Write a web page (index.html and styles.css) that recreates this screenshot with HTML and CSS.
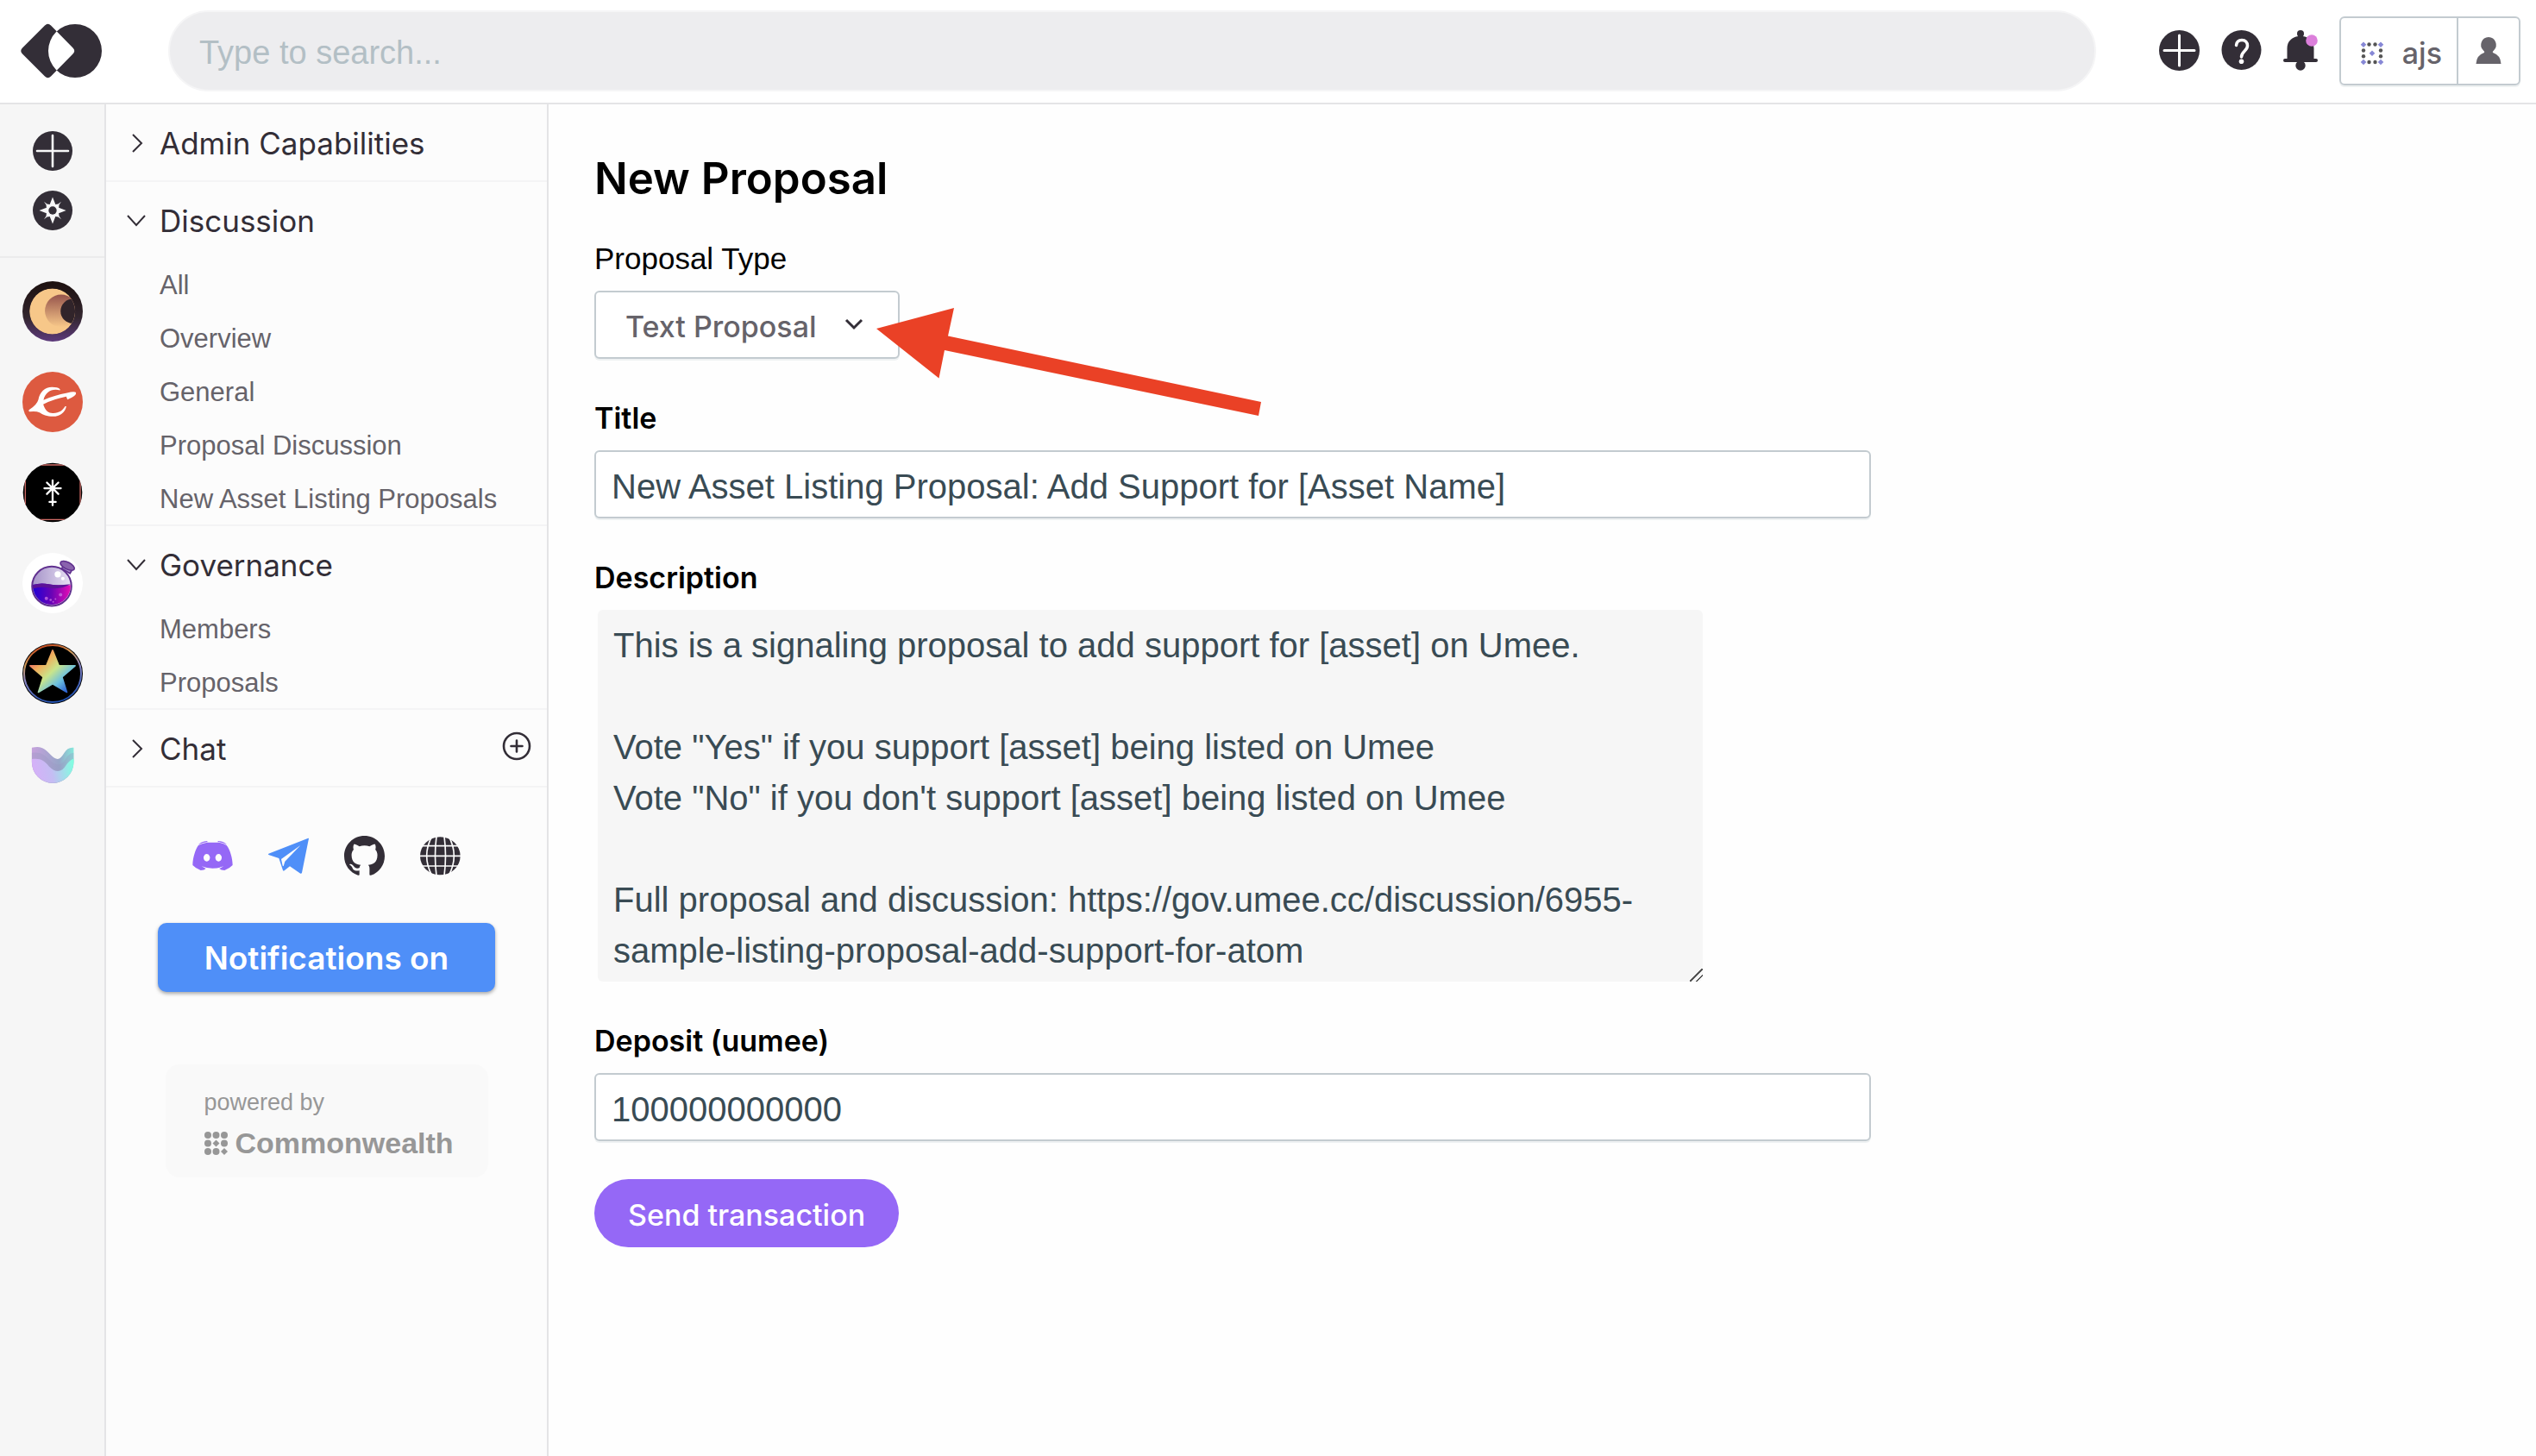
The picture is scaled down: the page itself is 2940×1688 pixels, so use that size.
FILE: index.html
```html
<!DOCTYPE html>
<html lang="en">
<head>
<meta charset="utf-8">
<title>New Proposal</title>
<link rel="stylesheet" href="styles.css">
</head>
<body>
<header class="topbar">
  <a class="logo" href="#" aria-label="Home">
    <svg width="94" height="64" viewBox="0 0 94 64"><path fill="#332e37" fill-rule="evenodd" d="M28 2.500Q31.500-1 35 2.500L60.500 28.500Q64 32 60.500 35.500L35 61.500Q31.500 65 28 61.500L2 35.500Q-1.500 32 2 28.500ZM63 1a31 31 0 1 1 0 62a31 31 0 1 1 0-62Z"/></svg>
  </a>
  <input class="search" type="search" placeholder="Type to search..." aria-label="Search">
  <nav class="actions">
    <button class="icon-btn" aria-label="Create">
      <svg width="47" height="47" viewBox="0 0 47 47"><circle cx="23.500" cy="23.500" r="23.500" fill="#332e37"/><path d="M23.500 6v35M6 23.500h35" stroke="#fff" stroke-width="3" stroke-linecap="round"/></svg>
    </button>
    <button class="icon-btn" aria-label="Help">
      <svg width="47" height="47" viewBox="0 0 47 47"><circle cx="23.500" cy="23" r="23" fill="#332e37"/><path d="M17.500 17.500C18 13 21 11.500 24 11.500C28 11.500 30.500 14 30.500 18C30.500 24 23.500 24.500 23.500 31" fill="none" stroke="#fff" stroke-width="3.500" stroke-linecap="round"/><circle cx="23.500" cy="36.300" r="2.800" fill="#fff"/></svg>
    </button>
    <button class="icon-btn" aria-label="Notifications">
      <svg width="40" height="47" viewBox="0 0 40 47"><g fill="#332e37"><circle cx="20" cy="4" r="4"/><path d="M17.500 4h5v3C30 8 35.500 13 35.500 21V33h2.500a2 2 0 0 1 0 4H2a2 2 0 0 1 0-4h2.500V21C4.500 13 10 8 17.500 7Z"/><circle cx="20" cy="41" r="5.700"/></g><circle cx="33" cy="12" r="6.800" fill="#dc7fdb"/></svg>
    </button>
    <div class="account">
      <button class="account-name">
        <svg width="28" height="28" viewBox="0 0 28 28"><g fill="#555"><circle cx="10.500" cy="3.500" r="2.200"/><circle cx="17.500" cy="3.500" r="2.200"/><circle cx="10.500" cy="24" r="2.200"/><circle cx="17.500" cy="24" r="2.200"/><circle cx="4" cy="10.500" r="2.200"/><circle cx="4" cy="17.200" r="2.200"/><circle cx="24" cy="10.500" r="2.200"/><circle cx="24" cy="17.200" r="2.200"/></g><path fill="#8788d6" d="M4 .5l3.300 3.300L4 7.100.7 3.800ZM24 .5l3.300 3.300L24 7.100l-3.300-3.300ZM4 20.700L7.300 24 4 27.300.7 24ZM24 20.700l3.300 3.300-3.300 3.300-3.300-3.300ZM14 10.500l3.300 3.300-3.300 3.300-3.300-3.300Z"/></svg>
        <span>ajs</span>
      </button>
      <button class="account-menu" aria-label="Account">
        <svg width="30" height="31" viewBox="0 0 30 31"><path fill="#66636a" d="M15 0a9 9 0 0 1 6 15.500Q19 17.300 20 18Q29 21 29.500 31H.5Q1 21 10 18Q11 17.300 9 15.500A9 9 0 0 1 15 0Z"/></svg>
      </button>
    </div>
  </nav>
</header>

<div class="layout">
  <nav class="rail" aria-label="Communities">
    <div class="rail-tools">
      <button class="icon-btn" aria-label="New community">
        <svg width="46" height="46" viewBox="0 0 46 46"><circle cx="23" cy="23" r="23" fill="#332e37"/><path d="M23 5v36M5 23h36" stroke="#f7f7f8" stroke-width="2.600" stroke-linecap="round"/></svg>
      </button>
      <button class="icon-btn" aria-label="Explore">
        <svg width="46" height="46" viewBox="0 0 46 46"><circle cx="23" cy="23" r="23" fill="#332e37"/><path fill="#f7f7f8" d="M23 7.500l3.300 8.500 3.200-.6 3.500-2.700-2.500 3.700-.4 3.300 8.500 3.300-8.500 3.300.4 3.300 2.500 3.700-3.500-2.700-3.200-.6L23 38.500 19.700 30l-3.200.6-3.500 2.700 2.500-3.700.4-3.300L7.500 23l8.400-3.300-.4-3.300-2.500-3.700 3.500 2.700 3.200.6Z"/><circle cx="23" cy="23" r="4.700" fill="#332e37"/></svg>
      </button>
    </div>
    <div class="communities">
      <a href="#" aria-label="Moon"><svg viewBox="0 0 212 212"><defs><linearGradient id="m1" x2="0" y2="1"><stop offset="0" stop-color="#1c100e"/><stop offset=".6" stop-color="#33262f"/><stop offset="1" stop-color="#5d3a7c"/></linearGradient><linearGradient id="m2" x2="0" y2="1"><stop offset="0" stop-color="#96544c"/><stop offset="1" stop-color="#f7c789"/></linearGradient><clipPath id="m3"><circle cx="105" cy="106" r="80"/></clipPath></defs><circle cx="106" cy="106" r="106" fill="url(#m1)"/><g clip-path="url(#m3)"><circle cx="105" cy="106" r="81" fill="#f7c789"/><circle cx="136" cy="104" r="57" fill="url(#m2)"/><circle cx="177" cy="105" r="43" fill="#31242a"/></g></svg></a>
      <a href="#" aria-label="Evmos"><svg viewBox="0 0 212 212"><circle cx="106" cy="106" r="106" fill="#dd5a40"/><path fill="#fff" d="M23 134Q51 117 56 98C60 72 79 54 104 54Q124 54 132 61V65C103 57 80 72 74 99Q112 82 157 74Q183 67 188 73Q192 84 158 98L154 87Q108 96 73 114C80 137 92 145 106 145C128 146 142 135 150 121H154C151 142 132 157 107 157C87 157 70 150 60 143Q48 137 25 140Q20 138 23 134Z"/></svg></a>
      <a href="#" aria-label="Juno"><svg viewBox="0 0 212 212"><defs><clipPath id="j1"><circle cx="106" cy="106" r="104"/></clipPath></defs><g clip-path="url(#j1)"><path d="M0 0h212v212H0Z"/><path d="M10 9h193v192H10Z" fill="none" stroke="#cf6b66" stroke-width="4"/></g><path d="M106 63v88M77 91h58M86 71l40 40M126 71l-40 40M95 139h22" stroke="#fff" stroke-width="7" stroke-linecap="round"/></svg></a>
      <a href="#" aria-label="Osmosis"><svg viewBox="0 0 212 212"><defs><linearGradient id="o1"><stop offset="0" stop-color="#2100d5"/><stop offset=".5" stop-color="#6a04b5"/><stop offset="1" stop-color="#e60db5"/></linearGradient><linearGradient id="o2"><stop offset="0" stop-color="#a593c8"/><stop offset="1" stop-color="#e8e0f4"/></linearGradient></defs><circle cx="106" cy="106" r="106" fill="#fff"/><path d="M138 55l10-18 30 16-11 19Z" fill="#a68cc9" stroke="#60308f" stroke-width="5"/><ellipse cx="158" cy="45" rx="27" ry="12" transform="rotate(27 158 45)" fill="#8a63ad" stroke="#60308f" stroke-width="5"/><circle cx="103" cy="117" r="69" fill="url(#o2)" stroke="#60308f" stroke-width="6"/><path d="M37 112Q65 104 92 110T169 113A66 66 0 0 1 37 119Z" fill="url(#o1)"/><path d="M37 112Q65 104 92 110T169 110Q130 131 90 122Q60 117 37 126Z" fill="#5c1397"/><circle cx="124" cy="75" r="11" fill="#fff"/><circle cx="142" cy="90" r="6" fill="#fff"/><g fill="#c76de0" opacity=".8"><circle cx="84" cy="160" r="6"/><circle cx="134" cy="147" r="6"/><circle cx="99" cy="165" r="4"/><circle cx="116" cy="162" r="3"/><circle cx="108" cy="172" r="3"/></g></svg></a>
      <a href="#" aria-label="Stargaze"><svg viewBox="0 0 212 212"><defs><linearGradient id="s1" x1=".1" y1=".1" x2=".9" y2=".9"><stop offset="0" stop-color="#e8576a"/><stop offset=".25" stop-color="#efae5c"/><stop offset=".5" stop-color="#c9e58b"/><stop offset=".75" stop-color="#6cc0e0"/><stop offset="1" stop-color="#2b5fd0"/></linearGradient><linearGradient id="s2" x1=".3" x2=".6" y2="1"><stop offset="0" stop-color="#c7481f"/><stop offset=".25" stop-color="#cf9a58"/><stop offset=".5" stop-color="#8a86c4"/><stop offset="1" stop-color="#1d4fb0"/></linearGradient></defs><circle cx="106" cy="106" r="106"/><circle cx="106" cy="106" r="100" fill="none" stroke="url(#s2)" stroke-width="6"/><path fill="url(#s1)" stroke="url(#s1)" stroke-width="5" stroke-linejoin="round" d="M106 24l22 54h57l-46 40 17 53-50-29-50 29 17-53-46-40h57Z"/></svg></a>
      <a href="#" aria-label="Umee"><svg viewBox="0 0 212 212"><defs><linearGradient id="u1" y1=".3" y2=".2"><stop offset="0" stop-color="#d6b0f8"/><stop offset=".45" stop-color="#c4bdf3"/><stop offset="1" stop-color="#80ffe0"/></linearGradient><linearGradient id="u2"><stop offset="0" stop-color="#c5a2dc"/><stop offset=".65" stop-color="#98a5c8"/><stop offset="1" stop-color="#86e9dc"/></linearGradient></defs><path fill="url(#u2)" d="M33 48C67 40 78 51 99 73C122 96 132 91 147 66Q159 45 180 48V99A73 73 0 0 1 33 99Z"/><path fill="#9b97c2" opacity=".35" d="M33 66C65 63 76 72 97 93C121 114 139 110 152 87Q163 67 180 66V99A73 73 0 0 1 33 99Z"/><path fill="url(#u1)" d="M33 88C65 84 76 94 94 114C117 138 139 134 153 110Q164 92 180 86V98A73 73 0 0 1 33 98Z"/></svg></a>
    </div>
  </nav>

  <aside class="sidebar">
    <section class="group">
      <button class="group-head"><svg class="chev" viewBox="0 0 24 24"><path d="M8 2l10 10L8 22"/></svg>Admin Capabilities</button>
    </section>
    <section class="group open">
      <button class="group-head"><svg class="chev" viewBox="0 0 24 24"><path d="M2 6l10 11L22 6"/></svg>Discussion</button>
      <a class="item" href="#">All</a>
      <a class="item" href="#">Overview</a>
      <a class="item" href="#">General</a>
      <a class="item" href="#">Proposal Discussion</a>
      <a class="item" href="#">New Asset Listing Proposals</a>
    </section>
    <section class="group open">
      <button class="group-head"><svg class="chev" viewBox="0 0 24 24"><path d="M2 6l10 11L22 6"/></svg>Governance</button>
      <a class="item" href="#">Members</a>
      <a class="item" href="#">Proposals</a>
    </section>
    <section class="group group-row">
      <button class="group-head"><svg class="chev" viewBox="0 0 24 24"><path d="M8 2l10 10L8 22"/></svg>Chat</button>
      <button class="icon-btn add" aria-label="Add chat channel"><svg width="34" height="34" viewBox="0 0 34 34"><circle cx="17" cy="17" r="15" fill="none" stroke="#332e37" stroke-width="2.600"/><path d="M17 10.500v13M10.500 17h13" stroke="#332e37" stroke-width="2.600" stroke-linecap="round"/></svg></button>
    </section>

    <div class="social">
      <a href="#" aria-label="Discord"><svg viewBox="0 0 141 141"><g fill="#9568f6"><path fill-rule="evenodd" d="M21 33Q35 25 52 23H90Q107 25 119 33C131 48 140 78 140 102Q130 113 112 120Q99 120 94 114L109 106Q90 113 70 113T32 106L47 114Q42 120 29 120Q11 113 1 102C1 78 10 48 21 33ZM50 63a11 13 0 1 0 .1 0ZM91 63a11 13 0 1 0 .1 0Z"/><path d="M21 31Q32 19 50 18L54 21Q38 22 21 31ZM120 31Q109 19 91 18L87 21Q103 22 120 31Z"/></g></svg></a>
      <a href="#" aria-label="Telegram"><svg viewBox="0 0 141 141"><path fill="#4f8ff8" fill-rule="evenodd" d="M141 9Q140 7 137 9L1 62Q-1 65 1 66L37 78L51 120Q53 124 56 121L75 106L112 131Q116 132 117 128ZM112 33L58 89L53 106L50 104L45 81Z"/></svg></a>
      <a href="#" aria-label="GitHub"><svg viewBox="0 0 16 16"><path fill="#332e37" d="M8 0C3.580 0 0 3.580 0 8c0 3.540 2.290 6.530 5.470 7.590.4.070.55-.17.55-.38 0-.19-.01-.82-.01-1.490-2.010.37-2.530-.49-2.690-.94-.09-.23-.48-.94-.82-1.130-.28-.15-.68-.52-.01-.53.63-.01 1.080.58 1.230.82.72 1.210 1.870.87 2.330.66.070-.52.28-.87.51-1.070-1.780-.2-3.640-.89-3.640-3.950 0-.87.31-1.590.82-2.150-.08-.2-.36-1.020.08-2.120 0 0 .67-.21 2.200.82.640-.18 1.320-.27 2-.27s1.360.09 2 .27c1.530-1.040 2.200-.82 2.200-.82.440 1.100.16 1.920.08 2.120.51.56.82 1.270.82 2.150 0 3.070-1.870 3.750-3.650 3.950.29.25.54.73.54 1.480 0 1.070-.01 1.930-.01 2.200 0 .21.15.46.55.38A8.010 8.010 0 0 0 16 8c0-4.420-3.580-8-8-8Z"/></svg></a>
      <a href="#" aria-label="Website"><svg viewBox="0 0 141 141"><ellipse cx="70" cy="70" rx="70" ry="66" fill="#332e37"/><g fill="none" stroke="#fcfcfc" stroke-width="5"><path d="M0 35h141M0 70h141M0 105h141M57 2Q48 70 57 138M84 2Q93 70 84 138M42 0Q4 70 42 140M99 0Q137 70 99 140"/></g></svg></a>
    </div>
    <button class="notify">Notifications on</button>
    <a class="powered" href="#">
      <span class="powered-by">powered by</span>
      <span class="brand"><svg width="27" height="27" viewBox="0 0 27 27"><g fill="#979797"><circle cx="4" cy="4" r="4"/><circle cx="13.500" cy="4" r="4"/><circle cx="23" cy="4" r="4"/><circle cx="4" cy="13.500" r="4"/><path d="M13.500 9.500l4 4-4 4-4-4Z"/><circle cx="23" cy="13.500" r="4"/><circle cx="4" cy="23" r="4"/><circle cx="13.500" cy="23" r="4"/><path d="M23 19l4 4-4 4-4-4Z"/></g></svg>Commonwealth</span>
    </a>
  </aside>

  <main class="main">
    <h1>New Proposal</h1>
    <form class="form">
      <div class="field">
        <label class="plain" for="type">Proposal Type</label>
        <div class="select">
          <select id="type"><option>Text Proposal</option></select>
          <svg class="caret" viewBox="0 0 24 16"><path d="M3 3l9 9 9-9"/></svg>
          <svg class="arrow" viewBox="1016 357 446 126"><path fill="#ea4126" d="M1016 381L1106 357 1099 389.500 1462 466 1459 482 1095 406 1088.500 438.500Z"/></svg>
        </div>
      </div>
      <div class="field">
        <label for="title">Title</label>
        <input id="title" type="text" value="New Asset Listing Proposal: Add Support for [Asset Name]">
      </div>
      <div class="field">
        <label for="desc">Description</label>
        <textarea id="desc" spellcheck="false">This is a signaling proposal to add support for [asset] on Umee.

Vote "Yes" if you support [asset] being listed on Umee
Vote "No" if you don't support [asset] being listed on Umee

Full proposal and discussion: https://gov.umee.cc/discussion/6955-sample-listing-proposal-add-support-for-atom</textarea>
      </div>
      <div class="field">
        <label for="deposit">Deposit (uumee)</label>
        <input id="deposit" type="text" value="100000000000">
      </div>
      <button class="send" type="button">Send transaction</button>
    </form>
  </main>
</div>
</body>
</html>
```
FILE: styles.css
```css
* { box-sizing: border-box; }

body {
  margin: 0;
  min-height: 100vh;
  display: flex;
  flex-direction: column;
  background: #fefefe;
  color: #000;
  font-family: "Liberation Sans", Arial, sans-serif;
}

a { color: inherit; text-decoration: none; }
svg { display: block; }
button, input, select, textarea { font: inherit; color: inherit; margin: 0; }
button { border: 0; padding: 0; background: none; cursor: pointer; }

/* Top bar */
.topbar {
  display: flex;
  align-items: center;
  height: 121px;
  padding: 0 18px 2px 24px;
  border-bottom: 2px solid #e4e4e6;
  background: #fff;
}
.search {
  flex: 1;
  min-width: 0;
  height: 94px;
  margin: 0 73px 0 77px;
  padding: 5px 34px 0;
  border: 2px solid #f5f5f6;
  border-radius: 47px;
  background: #ededef;
  font-size: 38px;
}
.search::placeholder { color: #b3bfc5; opacity: 1; }
.actions { display: flex; align-items: center; gap: 25px; }
.account {
  display: flex;
  height: 80px;
  border: 2px solid #c3cbd0;
  border-radius: 6px;
  box-shadow: 0 2px 0 #eef1f2;
  color: #66636a;
  font: 500 34px Inter, sans-serif;
}
.account-name { display: flex; align-items: center; gap: 21px; padding: 6px 17px 0 22px; }
.account-name span { line-height: 44px; }
.account-menu { padding: 0 20px; border-left: 2px solid #c3cbd0; }

/* Page columns */
.layout { flex: 1; display: flex; }
.rail {
  flex: none;
  width: 123px;
  border-right: 2px solid #e4e4e6;
  background: #f6f6f6;
}
.rail-tools {
  display: flex;
  flex-direction: column;
  align-items: center;
  gap: 23px;
  padding: 31px 0 30px;
  border-bottom: 2px solid #ebebec;
}
.communities {
  display: flex;
  flex-direction: column;
  align-items: center;
  gap: 35px;
  padding-top: 27px;
}
.communities svg { width: 70px; height: 70px; }

/* Sidebar */
.sidebar {
  flex: none;
  width: 513px;
  display: flex;
  flex-direction: column;
  border-right: 2px solid #e4e4e6;
  background: #fcfcfc;
}
.group { display: flex; flex-direction: column; border-bottom: 2px solid #f4f4f5; }
.group-row { flex-direction: row; align-items: center; justify-content: space-between; }
.group-head {
  display: flex;
  align-items: center;
  gap: 15px;
  height: 88px;
  padding: 2px 0 0 23px;
  color: #332e37;
  font: 400 35px Inter, sans-serif;
}
.open .group-head { height: 87px; }
.chev { width: 24px; height: 24px; fill: none; stroke: #332e37; stroke-width: 2px; }
.add { padding: 0 18px 4px 0; }
.item {
  padding: 4px 0 0 62px;
  color: #66636a;
  font-size: 31px;
  line-height: 58px;
}
.social { display: flex; justify-content: center; gap: 41px; margin-top: 56px; }
.social svg { width: 47px; height: 47px; }
.notify {
  align-self: center;
  width: 391px;
  height: 80px;
  margin-top: 54px;
  border-radius: 10px;
  background: #4f8ff8;
  box-shadow: 0 2px 4px rgba(0, 0, 0, .35);
  color: #fff;
  font: 600 37px Inter, sans-serif;
}
.powered {
  align-self: center;
  display: flex;
  flex-direction: column;
  gap: 10px;
  width: 374px;
  margin-top: 84px;
  padding: 27px 20px 20px 45px;
  border-radius: 16px;
  background: #f9f9f9;
  color: #979797;
}
.powered-by { font-size: 27px; line-height: 34px; }
.brand { display: flex; align-items: center; gap: 9px; font-size: 34px; font-weight: 700; line-height: 40px; }

/* Form */
.main { flex: 1; min-width: 0; padding: 53px 53px; }
h1 { margin: 0; font: 600 51px/66px Inter, sans-serif; }
.form { max-width: 1480px; margin-top: 35px; }
.field { display: flex; flex-direction: column; gap: 12px; margin-bottom: 44px; }
.field label { align-self: flex-start; font: 600 34px/50px Inter, sans-serif; }
.field .plain { font: 400 35px/50px "Liberation Sans", Arial, sans-serif; }
.field input {
  height: 79px;
  padding: 5px 18px 0;
  border: 2px solid #c3cbd0;
  border-radius: 6px;
  box-shadow: 0 2px 0 #eef1f2;
  background: #fff;
  color: #394b54;
  font-size: 40px;
}
.select { position: relative; align-self: flex-start; display: flex; }
.select select {
  appearance: none;
  width: 354px;
  height: 79px;
  padding: 4px 80px 0 34px;
  border: 2px solid #c3cbd0;
  border-radius: 6px;
  box-shadow: 0 2px 0 #eef1f2;
  background: #fff;
  color: #66636a;
  font: 500 34px Inter, sans-serif;
}
.caret {
  position: absolute;
  right: 41px;
  top: 31px;
  width: 24px;
  height: 16px;
  fill: none;
  stroke: #332e37;
  stroke-width: 3px;
  pointer-events: none;
}
.arrow {
  position: absolute;
  left: 327px;
  top: 20px;
  width: 446px;
  height: 126px;
  pointer-events: none;
}
.field textarea {
  max-width: 1281px;
  height: 431px;
  margin-left: 4px;
  padding: 12px 18px 0;
  border: 0;
  border-radius: 6px;
  background: #f6f6f6;
  color: #394b54;
  font-size: 40px;
  line-height: 59px;
  resize: both;
}
textarea::-webkit-resizer {
  background: linear-gradient(135deg, transparent 46%, #555 46%, #555 54%, transparent 54%, transparent 71%, #555 71%, #555 79%, transparent 79%);
}
.send {
  height: 79px;
  padding: 4px 39px 0;
  border-radius: 40px;
  background: #9568f6;
  color: #fff;
  font: 500 34px Inter, sans-serif;
}
```
